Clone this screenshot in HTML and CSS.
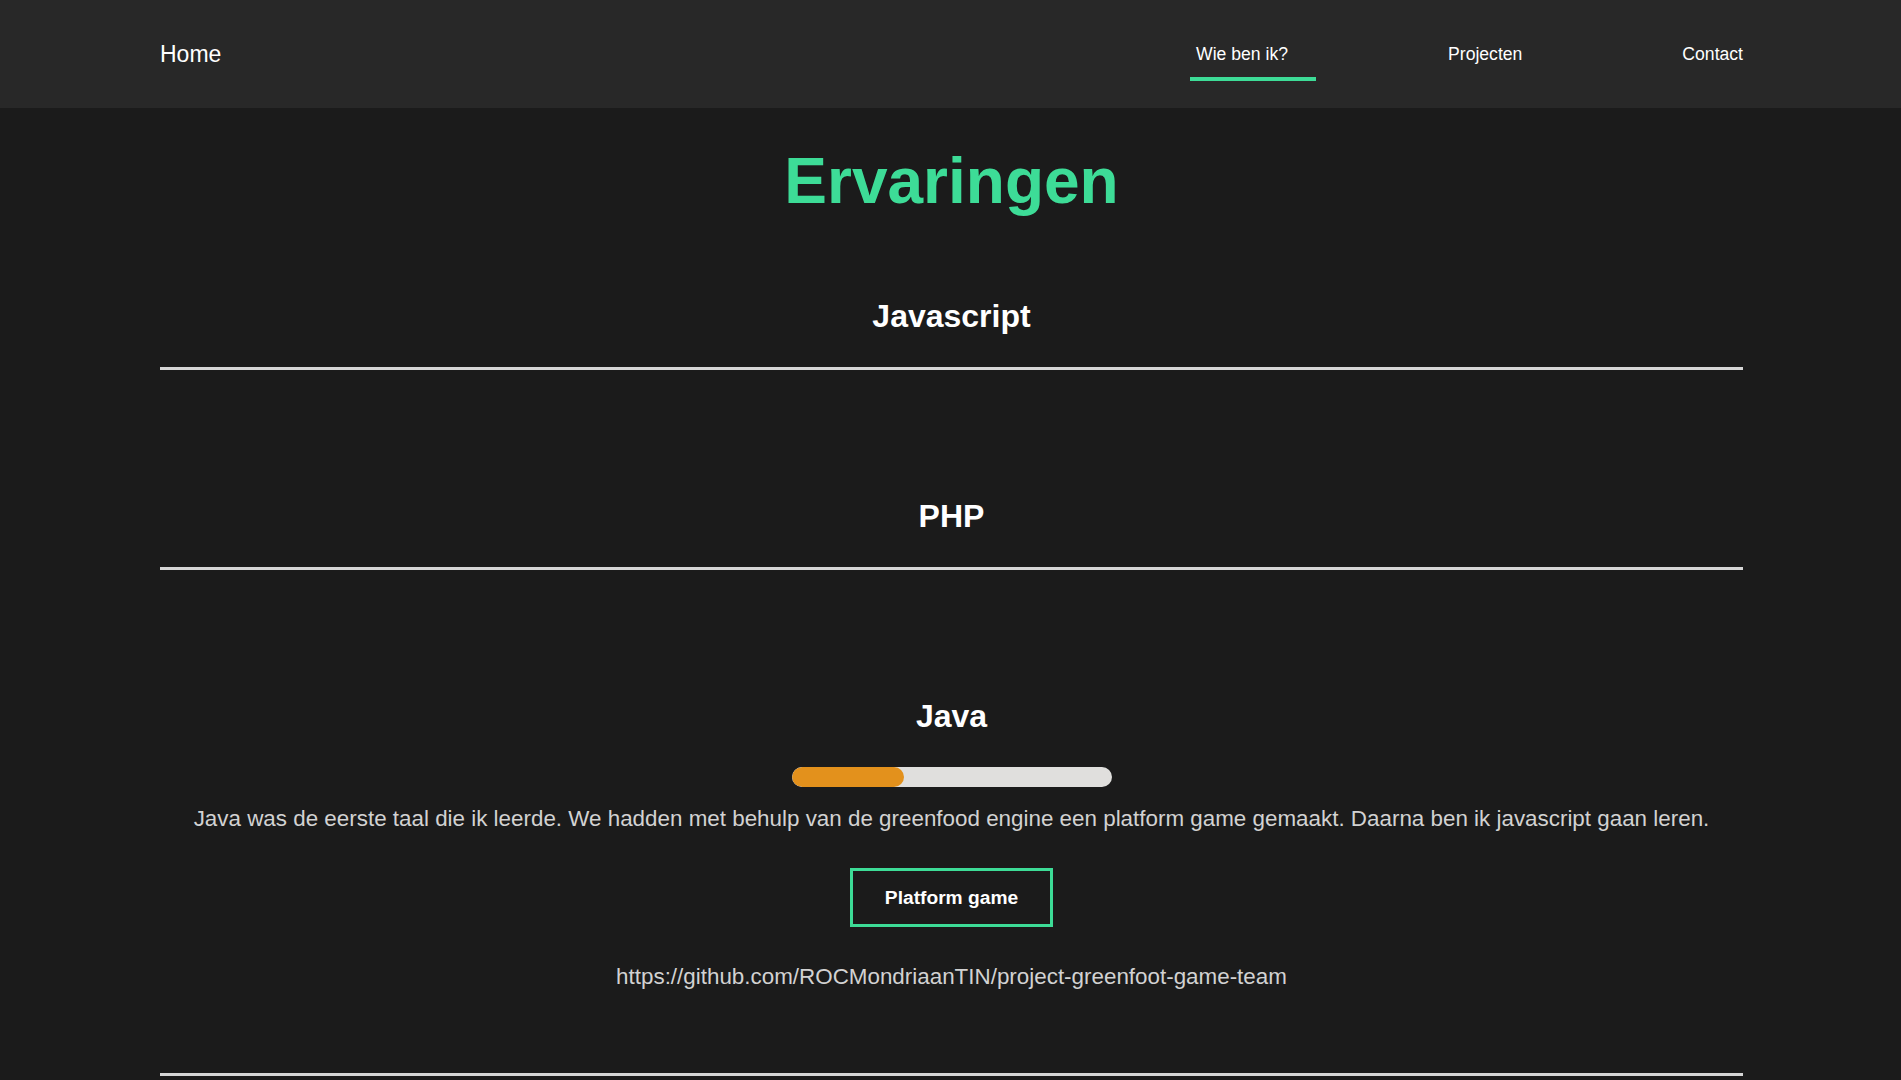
FILE: index.html
```html
<!DOCTYPE html>
<html lang="nl">
<head>
<meta charset="utf-8">
<title>Ervaringen</title>
<link rel="stylesheet" href="styles.css">
</head>
<body>
<header class="topbar">
  <div class="topbar-inner">
    <a class="brand" href="#">Home</a>
    <nav class="nav">
      <a class="nav-link active" href="#">Wie ben ik?</a>
      <a class="nav-link" href="#">Projecten</a>
      <a class="nav-link" href="#">Contact</a>
    </nav>
  </div>
</header>
<main class="content">
  <h1 class="page-title">Ervaringen</h1>
  <section class="skill">
    <h2 class="skill-title">Javascript</h2>
  </section>
  <section class="skill">
    <h2 class="skill-title">PHP</h2>
  </section>
  <section class="skill skill-filled">
    <h2 class="skill-title">Java</h2>
    <div class="bar"><div class="bar-fill" style="width:35%"></div></div>
    <p class="skill-text">Java was de eerste taal die ik leerde. We hadden met behulp van de greenfood engine een platform game gemaakt. Daarna ben ik javascript gaan leren.</p>
    <a class="btn" href="#">Platform game</a>
    <p class="skill-link">https://github.com/ROCMondriaanTIN/project-greenfoot-game-team</p>
  </section>
</main>
</body>
</html>
```
FILE: styles.css
```css
* { box-sizing: border-box; }
html, body {
  margin: 0;
  padding: 0;
  background: #1b1b1b;
  font-family: "Liberation Sans", Arial, sans-serif;
  color: #ffffff;
}
a { text-decoration: none; color: inherit; }

.topbar {
  background: #282828;
  height: 108px;
}
.topbar-inner {
  margin: 0 158px 0 160px;
  height: 100%;
  display: flex;
  align-items: center;
  justify-content: space-between;
}
.brand {
  font-size: 23px;
  line-height: 26px;
  color: #ffffff;
}
.nav {
  display: flex;
  gap: 160px;
}
.nav-link {
  position: relative;
  font-size: 17.6px;
  line-height: 20px;
  color: #ffffff;
}
.nav-link.active::after {
  content: "";
  position: absolute;
  left: -6px;
  top: calc(100% + 13px);
  width: 126px;
  height: 4px;
  background: #3ddc97;
}

.content {
  margin: 0 158px 0 160px;
  text-align: center;
  display: flow-root;
}
.page-title {
  margin: 38px 0 0;
  font-size: 64px;
  line-height: 71.5px;
  font-weight: 700;
  color: #3ddc97;
}
.skill {
  margin-top: 127.5px;
  border-bottom: 3px solid #d6d6d6;
}
.page-title + .skill { margin-top: 80px; }
.skill-title {
  margin: 0 0 32.2px;
  padding-top: 1.5px;
  font-size: 32px;
  line-height: 35.75px;
  font-weight: 700;
  color: #ffffff;
}
.skill-filled {
  padding-bottom: 84.4px;
}
.bar {
  width: 320px;
  height: 20px;
  margin: 0 auto 19.4px;
  background: #e0dfdd;
  border-radius: 10px;
  overflow: hidden;
}
.bar-fill {
  height: 100%;
  background: #e3911c;
  border-radius: 10px;
}
.skill-text {
  margin: 0 0 36.6px;
  font-size: 22.4px;
  line-height: 25px;
  color: #d2d2d2;
}
.btn {
  display: inline-block;
  padding: 15px 31.5px;
  border: 3px solid #3ddc97;
  font-size: 19.2px;
  line-height: 23px;
  font-weight: 700;
  color: #ffffff;
  vertical-align: top;
}
.skill-link {
  margin: 37px 0 0;
  font-size: 22.4px;
  line-height: 25px;
  color: #d2d2d2;
}
```
